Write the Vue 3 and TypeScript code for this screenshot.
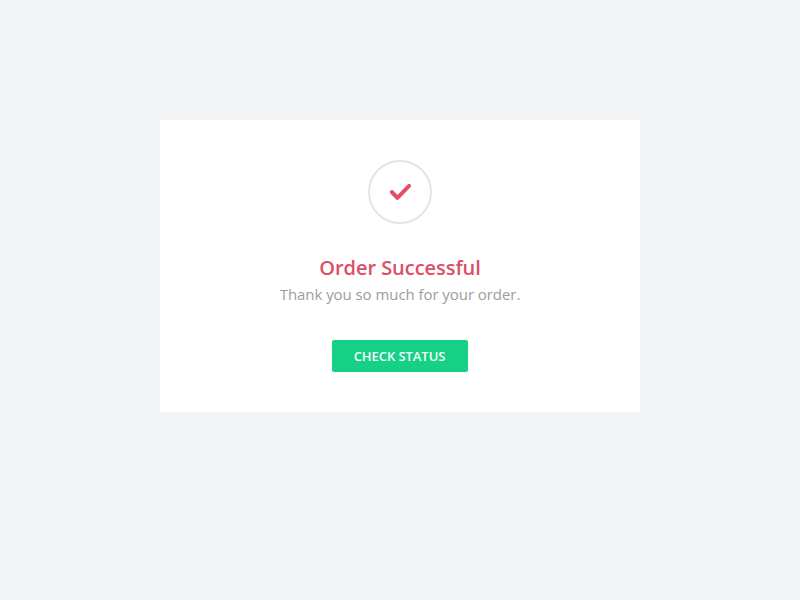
<script setup lang="ts">
const title: string = 'Order Successful'
const message: string = 'Thank you so much for your order.'
</script>

<template>
  <main class="page">
    <section class="card">
      <div class="badge">
        <svg class="check" viewBox="0 0 24 18" aria-hidden="true">
          <path d="M3.8 9 L9.4 14.9 L21.1 2.9" />
        </svg>
      </div>
      <h1 class="title">{{ title }}</h1>
      <p class="message">{{ message }}</p>
      <button class="action" type="button">CHECK STATUS</button>
    </section>
  </main>
</template>

<style>
body {
  background: #f2f4f6;
}
</style>

<style scoped>
.page {
  min-height: 600px;
  box-sizing: border-box;
  padding-top: 120px;
  display: flex;
  justify-content: center;
  align-items: flex-start;
  font-family: 'Open Sans', sans-serif;
}
.card {
  box-sizing: border-box;
  width: 480px;
  height: 292px;
  padding-top: 40px;
  border-radius: 3px;
  background: #fff;
  display: flex;
  flex-direction: column;
  align-items: center;
}
.badge {
  box-sizing: border-box;
  width: 64px;
  height: 64px;
  border: 2px solid #e3e4e4;
  border-radius: 50%;
  display: flex;
  align-items: center;
  justify-content: center;
}
.check {
  width: 24px;
  height: 18px;
  fill: none;
  stroke: #e54d66;
  stroke-width: 4;
  stroke-linecap: round;
  stroke-linejoin: round;
}
.title {
  margin: 30px 0 0;
  font-size: 20px;
  line-height: 28px;
  font-weight: 600;
  letter-spacing: -0.04px;
  color: #dc4f66;
}
.message {
  margin: 0;
  font-size: 15px;
  line-height: 24px;
  letter-spacing: -0.06px;
  color: #9b9e9e;
}
.action {
  box-sizing: border-box;
  margin: 34px 0 0;
  padding: 0 1px 0 0;
  width: 136px;
  height: 32px;
  border: 0;
  border-radius: 2px;
  background: #15d186;
  color: #f4fffa;
  font-family: inherit;
  font-size: 13px;
  line-height: 32px;
  font-weight: 600;
  letter-spacing: -0.06px;
}
</style>
